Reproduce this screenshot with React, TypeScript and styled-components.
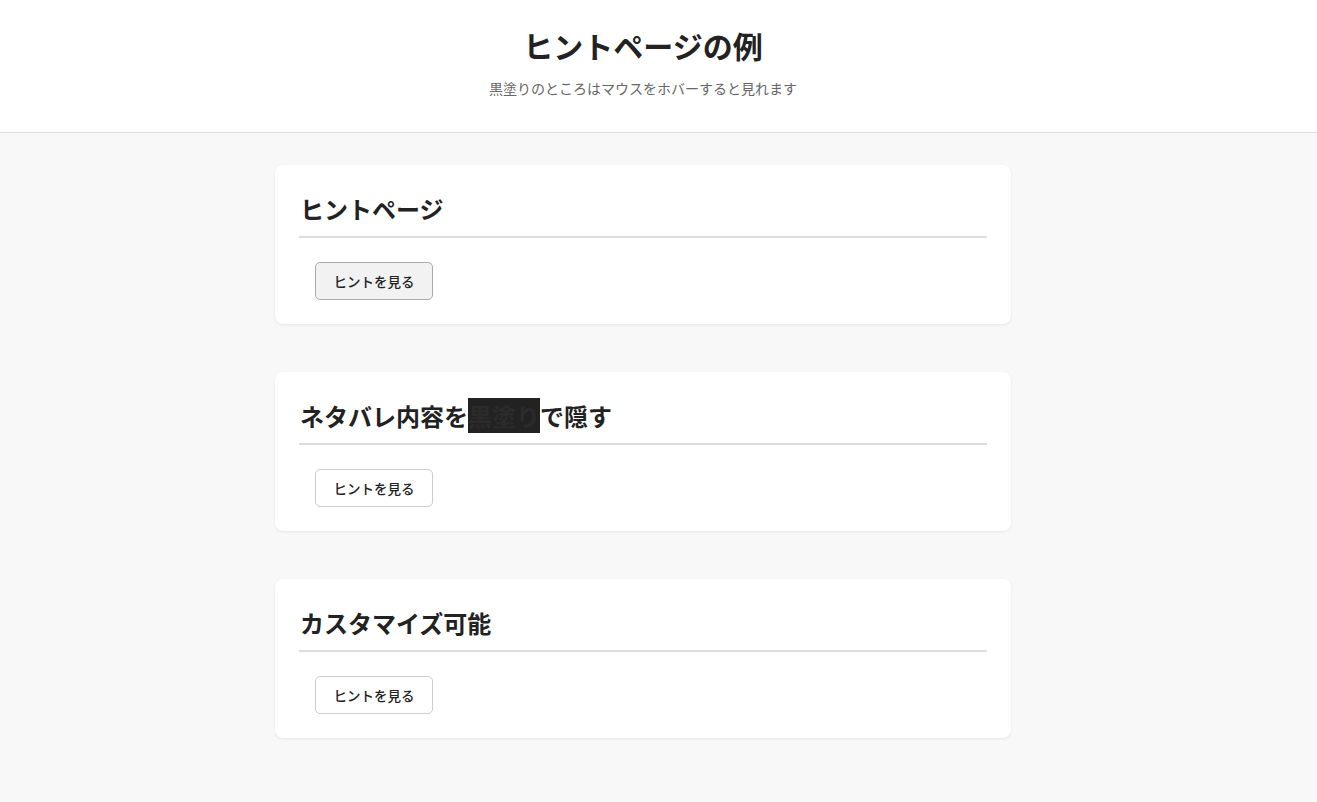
import React from 'react';
import styled, { createGlobalStyle } from 'styled-components';

const GlobalStyle = createGlobalStyle`
  * {
    box-sizing: border-box;
  }
  body {
    margin: 0;
    background: #f8f8f8;
    color: #222;
    font-family: "Noto Sans CJK JP", "Noto Sans", sans-serif;
  }
`;

// content column sits a little left of the window centre in the reference
const Header = styled.header`
  background: #fff;
  border-bottom: 1px solid #ddd;
  height: 133px;
  padding: 23px 31px 0 0;
  text-align: center;
`;

const Title = styled.h1`
  margin: 0;
  font-size: 30px;
  line-height: 45px;
  font-weight: 700;
  color: #222;
`;

const Subtitle = styled.p`
  margin: 10px 0 0;
  font-size: 14px;
  line-height: 20px;
  color: #666;
`;

const Main = styled.main`
  padding: 32px 31px 48px 0;
`;

const Column = styled.div`
  width: 736px;
  margin: 0 auto;
  display: flex;
  flex-direction: column;
  gap: 48px;
`;

const Card = styled.section`
  background: #fff;
  border-radius: 8px;
  box-shadow: 0 1px 3px rgba(0, 0, 0, 0.08);
  padding: 24px;
`;

const CardTitle = styled.h2`
  margin: 0;
  padding: 2px 0 9px 1px;
  font-size: 24px;
  line-height: 36px;
  font-weight: 700;
  border-bottom: 2px solid #ddd;
`;

const Blackout = styled.span`
  background: #222;
  color: #2b2b2b;
  &:hover {
    color: #fff;
  }
`;

const HintButton = styled.button<{ $active?: boolean }>`
  margin: 24px 0 0 16px;
  width: 118px;
  height: 38px;
  border-radius: 5px;
  border: 1px solid ${(p) => (p.$active ? '#aaa' : '#ccc')};
  background: ${(p) => (p.$active ? '#f2f2f2' : '#fff')};
  font-family: inherit;
  font-size: 13.5px;
  font-weight: 500;
  color: #222;
  cursor: pointer;
`;

const cards = [
  { title: <>ヒントページ</>, active: true },
  {
    title: (
      <>
        ネタバレ内容を<Blackout>黒塗り</Blackout>で隠す
      </>
    ),
    active: false,
  },
  { title: <>カスタマイズ可能</>, active: false },
];

const App = () => {
  return (
    <>
      <GlobalStyle />
      <Header>
        <Title>ヒントページの例</Title>
        <Subtitle>黒塗りのところはマウスをホバーすると見れます</Subtitle>
      </Header>
      <Main>
        <Column>
          {cards.map((c, i) => (
            <Card key={i}>
              <CardTitle>{c.title}</CardTitle>
              <HintButton $active={c.active}>ヒントを見る</HintButton>
            </Card>
          ))}
        </Column>
      </Main>
    </>
  );
};

export default App;
